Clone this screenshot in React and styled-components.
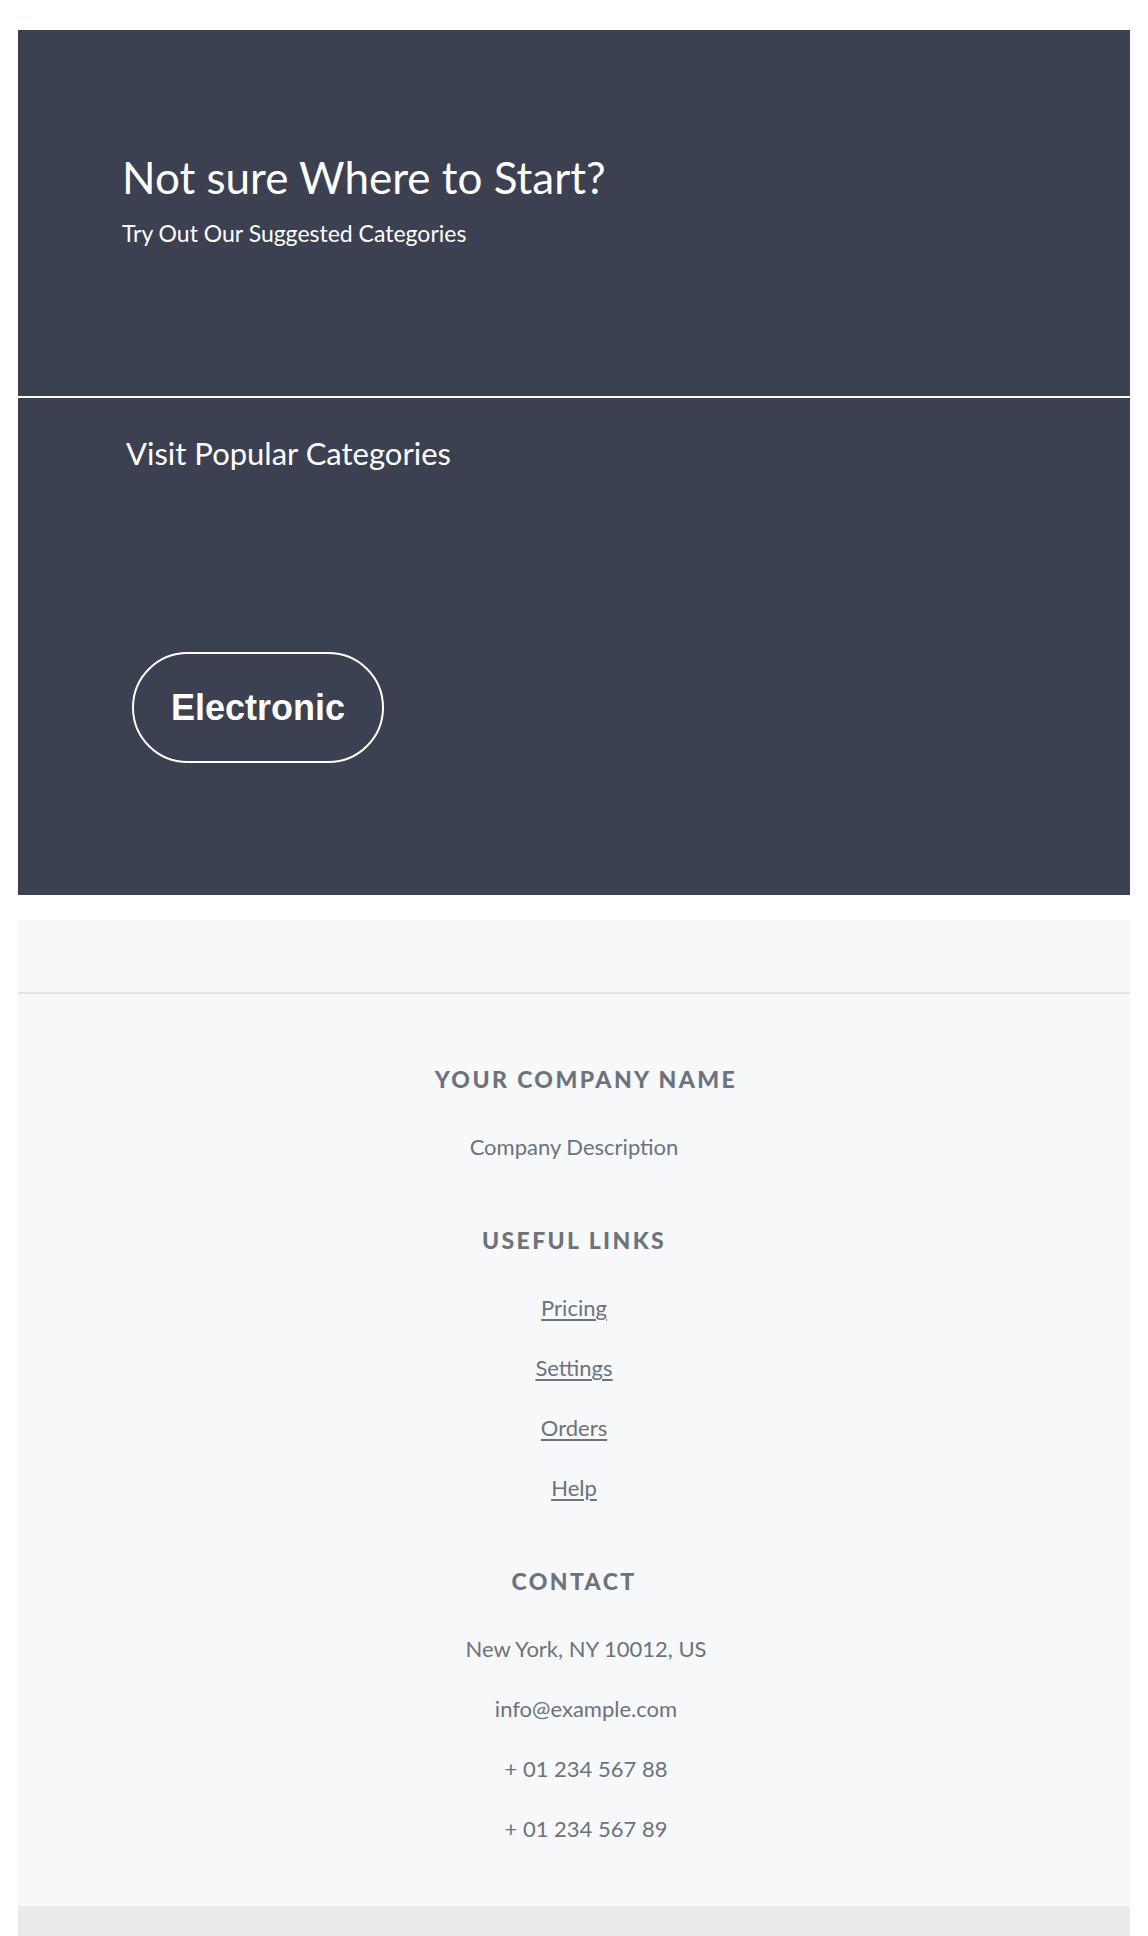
import React from 'react';
import styled, { createGlobalStyle } from 'styled-components';

const GlobalStyle = createGlobalStyle`
  body {
    margin: 0;
    background: #fff;
    font-family: Lato, "Noto Sans", sans-serif;
  }
`;

const Page = styled.div`
  padding: 30px 18px 0;
`;

const Hero = styled.section`
  background: #3b4151;
  height: 366px;
  padding: 123px 0 0 104px;
  box-sizing: border-box;
  color: #fff;
`;

const Title = styled.h1`
  margin: 0;
  font-weight: 400;
  font-size: 44px;
  line-height: 48px;
`;

const Subtitle = styled.p`
  margin: 19px 0 0;
  font-size: 23px;
  line-height: 26px;
`;

const Categories = styled.section`
  background: #3b4151;
  border-top: 2px solid #fff;
  height: 499px;
  box-sizing: border-box;
  padding: 38px 0 0;
  color: #fff;
`;

const CategoriesTitle = styled.h2`
  margin: 0 0 0 108px;
  font-weight: 400;
  font-size: 31px;
  line-height: 34px;
`;

const CategoryList = styled.div`
  display: flex;
  gap: 24px;
  margin: 182px 0 0 114px;
`;

const CategoryButton = styled.button`
  height: 111px;
  padding: 0 37px;
  border: 2px solid #fff;
  border-radius: 56px;
  background: transparent;
  color: #fff;
  font-family: "Liberation Sans", Arial, sans-serif;
  font-weight: 700;
  font-size: 36px;
  cursor: pointer;
`;

const Footer = styled.footer`
  margin-top: 25px;
  background: #f7f8fa;
  color: #6c737c;
`;

const FooterTop = styled.div`
  height: 72px;
  border-bottom: 2px solid #e1e4e9;
`;

const FooterBody = styled.div`
  display: flex;
  flex-direction: column;
  align-items: center;
  gap: 64px;
  padding: 71px 0 62px;
  text-align: center;
`;

const Column = styled.div`
  display: flex;
  flex-direction: column;
  align-items: center;
`;

const ColumnTitle = styled.h6`
  margin: 0 0 39px;
  font-size: 23px;
  line-height: 28px;
  font-weight: 900;
  letter-spacing: 2.4px;
  text-transform: uppercase;
  color: #6c737c;
`;

const Items = styled.div`
  display: flex;
  flex-direction: column;
  align-items: center;
  gap: ${({ $gap }) => $gap}px;
`;

const Text = styled.p`
  margin: 0;
  font-size: 22px;
  line-height: 30px;
  color: #6c737c;
`;

const Link = styled.a`
  font-size: 22px;
  line-height: 30px;
  color: #6c737c;
  text-decoration: underline;
  text-underline-offset: 3px;
`;

const IconSlot = styled.i`
  display: inline-block;
  width: 0;
  margin-right: 24px;
`;

const BottomBar = styled.div`
  height: 60px;
  background: #e9eaec;
`;

const links = ['Pricing', 'Settings', 'Orders', 'Help'];
const contact = ['New York, NY 10012, US', 'info@example.com', '+ 01 234 567 88', '+ 01 234 567 89'];

export default function App() {
  return (
    <>
      <GlobalStyle />
      <Page>
        <Hero>
          <Title>Not sure Where to Start?</Title>
          <Subtitle>Try Out Our Suggested Categories</Subtitle>
        </Hero>
        <Categories>
          <CategoriesTitle>Visit Popular Categories</CategoriesTitle>
          <CategoryList>
            <CategoryButton>Electronic</CategoryButton>
          </CategoryList>
        </Categories>
        <Footer>
          <FooterTop />
          <FooterBody>
            <Column>
              <ColumnTitle>
                <IconSlot />
                Your Company Name
              </ColumnTitle>
              <Text>Company Description</Text>
            </Column>
            <Column>
              <ColumnTitle>Useful Links</ColumnTitle>
              <Items $gap={30}>
                {links.map((l) => (
                  <Link key={l} href="#">{l}</Link>
                ))}
              </Items>
            </Column>
            <Column>
              <ColumnTitle>Contact</ColumnTitle>
              <Items $gap={30}>
                {contact.map((c) => (
                  <Text key={c}>
                    <IconSlot />
                    {c}
                  </Text>
                ))}
              </Items>
            </Column>
          </FooterBody>
          <BottomBar />
        </Footer>
      </Page>
    </>
  );
}
